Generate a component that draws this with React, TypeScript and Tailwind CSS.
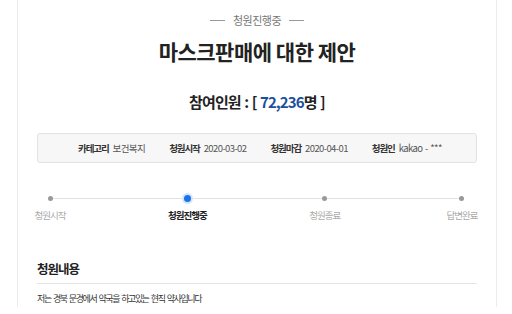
const info = [
  { label: "카테고리", value: "보건복지" },
  { label: "청원시작", value: "2020-03-02" },
  { label: "청원마감", value: "2020-04-01" },
  { label: "청원인", value: "kakao - ***" },
];

const steps = [
  { label: "청원시작", active: false },
  { label: "청원진행중", active: true },
  { label: "청원종료", active: false },
  { label: "답변완료", active: false },
];

export default function App() {
  return (
    <div className="w-[512px] h-[314px] bg-white overflow-hidden font-['Noto_Sans_CJK_KR',sans-serif]">
      <div className="ml-[17px] w-[480px] h-[307px] border-x border-[#ececec] px-[19px]">
        {/* status */}
        <div className="flex items-center justify-center gap-[8px] pt-[12px] text-[11px] leading-[16px] tracking-[-0.5px] text-[#777]">
          <span className="w-[15px] h-px bg-[#999]" />
          <span>청원진행중</span>
          <span className="w-[15px] h-px bg-[#999]" />
        </div>
        <h1 className="mt-[8px] text-center text-[21px] leading-[30px] font-bold tracking-[-0.5px] text-[#222]">
          마스크판매에 대한 제안
        </h1>
        <div className="mt-[24px] text-center text-[15px] leading-[24px] font-bold tracking-[-0.9px] [word-spacing:1px] text-[#222]">
          참여인원 : [ <span className="text-[#1a4f9c]">72,236</span>명 ]
        </div>

        {/* info box */}
        <div className="mt-[19px] h-[30px] rounded-[3px] border border-[#e3e3e3] bg-[#f7f7f7] flex items-center gap-[24px] pl-[40px] text-[9.5px] text-[#333]">
          {info.map((i) => (
            <div key={i.label} className="flex items-center gap-[4px] whitespace-nowrap">
              <span className="font-bold tracking-[-1.1px]">{i.label}</span>
              <span className="text-[#555] tracking-[-0.6px] [word-spacing:1px]">{i.value}</span>
            </div>
          ))}
        </div>

        {/* progress */}
        <div className="mt-[30px] ml-[13px] mr-[15px] relative">
          <div className="absolute left-0 right-0 top-[5px] h-px bg-[#e2e2e2]" />
          <div className="relative flex justify-between">
            {steps.map((s) => (
              <div key={s.label} className="w-0 flex flex-col items-center">
                <div className="h-[11px] flex items-center">
                  {s.active ? (
                    <span className="block w-[7px] h-[7px] rounded-full bg-[#1a73e8] shadow-[0_0_0_2px_#d5e6fb]" />
                  ) : (
                    <span className="block w-[5px] h-[5px] rounded-full bg-[#999]" />
                  )}
                </div>
                <span
                  className={
                    "mt-[4px] whitespace-nowrap text-[9.5px] leading-[14px] tracking-[-1px] " +
                    (s.active ? "font-bold text-[#222]" : "text-[#aaa]")
                  }
                >
                  {s.label}
                </span>
              </div>
            ))}
          </div>
        </div>

        {/* content */}
        <div className="mt-[37px] text-[12.5px] leading-[20px] font-bold tracking-[-1px] text-[#222]">청원내용</div>
        <div className="mt-[4px] h-px bg-[#e5e5e5]" />
        <p className="mt-[8px] text-[9px] leading-[14px] tracking-[-1.4px] [word-spacing:1.5px] text-[#333]">
          저는 경북 문경에서 약국을 하고있는 현직 약사입니다
        </p>
      </div>
    </div>
  );
}
